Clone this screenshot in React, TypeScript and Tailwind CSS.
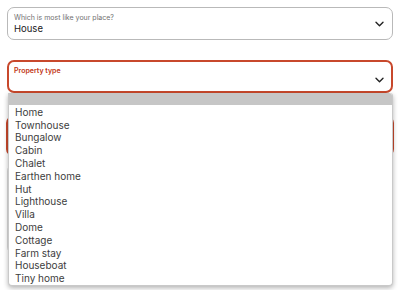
import React from 'react';

const propertyTypes = [
  'Home',
  'Townhouse',
  'Bungalow',
  'Cabin',
  'Chalet',
  'Earthen home',
  'Hut',
  'Lighthouse',
  'Villa',
  'Dome',
  'Cottage',
  'Farm stay',
  'Houseboat',
  'Tiny home',
];

const Chevron: React.FC = () => (
  <svg width="9" height="6" viewBox="0 0 9 6" fill="none" className="text-[#222]">
    <path d="M1 1.2l3.5 3.5 3.5-3.5" stroke="currentColor" strokeWidth="1.4" strokeLinecap="round" strokeLinejoin="round" />
  </svg>
);

export default function App() {
  return (
    <div
      className="relative w-[400px] h-[290px] overflow-hidden bg-white"
      style={{ fontFamily: 'Inter, "Noto Sans", sans-serif' }}
    >
      <div className="flex flex-col px-[7px] pt-[7px]">
        {/* first select */}
        <div className="flex items-center justify-between h-[33px] rounded-[7px] border border-[#b9b9b9] pl-[6px] pr-[8px]">
          <div className="flex flex-col">
            <span className="text-[7px] leading-[9px] text-[#717171]">Which is most like your place?</span>
            <span className="text-[9.5px] leading-[13px] text-[#222]">House</span>
          </div>
          <Chevron />
        </div>

        {/* second select, error state */}
        <div className="mt-[20px] flex items-start justify-between h-[33px] rounded-[7px] border-2 border-[#c8482c] pl-[5px] pr-[7px] pt-[4px]">
          <span className="text-[7px] leading-[9px] font-semibold text-[#c13515]">Property type</span>
          <div className="pt-[11px]">
            <Chevron />
          </div>
        </div>

        {/* content hidden under the open list */}
        <div className="mt-[23px] -mx-[1px] h-[40px] rounded-[7px] border-2 border-[#c8482c]" />
        <div className="mt-[8px] h-[90px] rounded-[7px] border border-[#dddddd]" />
      </div>

      {/* open native-style list */}
      <div className="absolute left-[8px] right-[7px] top-[93px] h-[193px] flex flex-col rounded-b-[4px] rounded-tr-[3px] border-x border-b border-[#c9c9c9] bg-white shadow-[0_2px_5px_rgba(0,0,0,0.3)]">
        <div className="h-[12px] bg-[#c6c6c6] rounded-tr-[3px]" />
        <ul className="flex flex-col pl-[6px] pt-[1px]">
          {propertyTypes.map((t) => (
            <li key={t} className="text-[10px] leading-[12.8px] text-[#3d3d3d]">
              {t}
            </li>
          ))}
        </ul>
      </div>
    </div>
  );
}
